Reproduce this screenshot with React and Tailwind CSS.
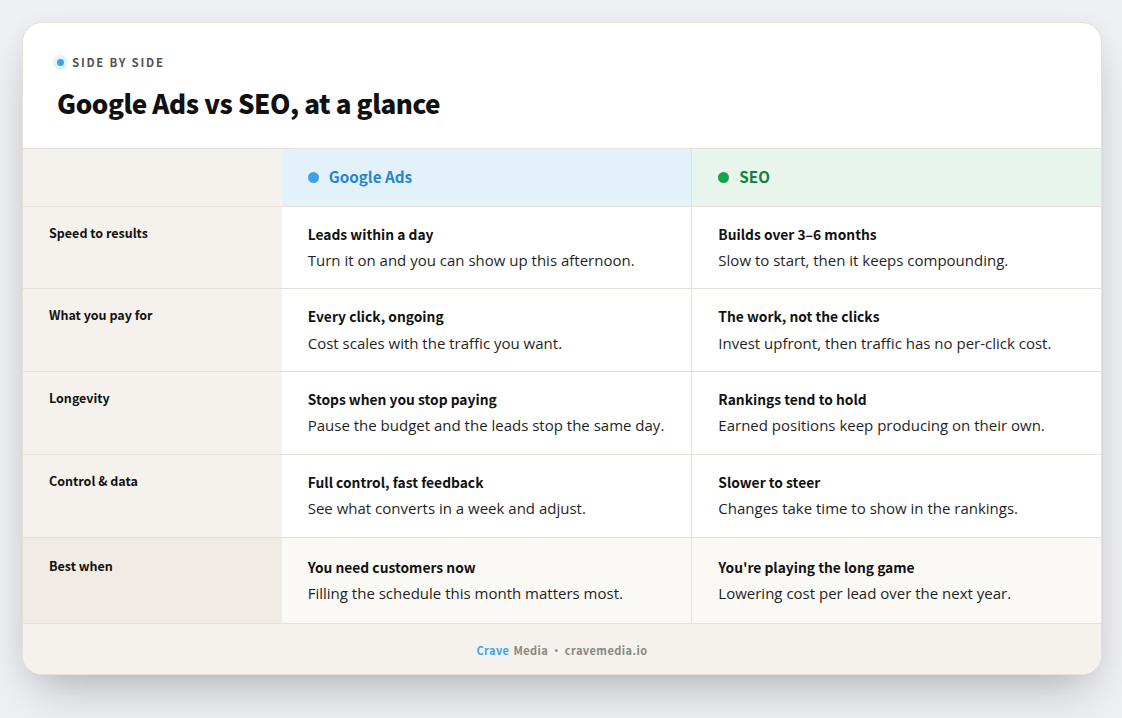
const rows = [
  {
    label: 'Speed to results',
    ads: ['Leads within a day', 'Turn it on and you can show up this afternoon.'],
    seo: ['Builds over 3–6 months', 'Slow to start, then it keeps compounding.'],
  },
  {
    label: 'What you pay for',
    ads: ['Every click, ongoing', 'Cost scales with the traffic you want.'],
    seo: ['The work, not the clicks', 'Invest upfront, then traffic has no per-click cost.'],
  },
  {
    label: 'Longevity',
    ads: ['Stops when you stop paying', 'Pause the budget and the leads stop the same day.'],
    seo: ['Rankings tend to hold', 'Earned positions keep producing on their own.'],
  },
  {
    label: 'Control & data',
    ads: ['Full control, fast feedback', 'See what converts in a week and adjust.'],
    seo: ['Slower to steer', 'Changes take time to show in the rankings.'],
  },
];

const best = {
  label: 'Best when',
  ads: ['You need customers now', 'Filling the schedule this month matters most.'],
  seo: ["You're playing the long game", 'Lowering cost per lead over the next year.'],
};

const heading = "font-['Noto_Sans_CJK_SC','Noto_Sans',sans-serif]";

function Cell({ title, text, right, highlight }) {
  return (
    <div className={`px-[26px] ${highlight ? 'pt-[19px] pb-[18.8px]' : 'pt-[17px] pb-[17.55px]'} ${right ? 'border-l border-[#e5e0d8]' : ''}`}>
      <div className={`${heading} text-[13.8px] leading-[21px] font-bold text-[#111111]`}>{title}</div>
      <div className="mt-[5.2px] text-[15px] leading-[21px] text-[#1f1f1f]">{text}</div>
    </div>
  );
}

function Row({ row, highlight }) {
  return (
    <div className={`grid grid-cols-[24%_38%_38%] border-t border-[#e5e0d8] ${highlight ? 'bg-[#fbf9f6]' : 'bg-white'}`}>
      <div className={`${heading} px-[26px] text-[12.5px] leading-[19px] font-bold text-[#111111] ${highlight ? 'bg-[#f0ebe4] pt-[18px]' : 'bg-[#f5f2ed] pt-[16px]'}`}>
        {row.label}
      </div>
      <Cell title={row.ads[0]} text={row.ads[1]} highlight={highlight} />
      <Cell title={row.seo[0]} text={row.seo[1]} right highlight={highlight} />
    </div>
  );
}

export default function App() {
  return (
    <div className="min-h-[718px] bg-[#eef0f3] p-[22px] font-['Open_Sans',sans-serif]">
      <div className="w-[1080px] rounded-[20px] border border-[#e5e0d8] bg-white shadow-[0_24px_50px_-14px_rgba(0,0,0,0.26),0_4px_24px_rgba(0,0,0,0.04)]">
        {/* Header */}
        <div className="h-[125px] px-[30px] pt-[29px]">
          <div className="flex items-center gap-[4px]">
            <span className="flex h-[15px] w-[15px] items-center justify-center rounded-full bg-[#e3f1fb]">
              <span className="h-[7px] w-[7px] rounded-full bg-[#3ba3ee]" />
            </span>
            <span className={`${heading} text-[11.5px] leading-[20px] font-bold tracking-[0.15em] text-[#55524e]`}>SIDE BY SIDE</span>
          </div>
          <h1 className={`${heading} mt-[10px] ml-[4px] text-[26px] leading-[42px] font-black tracking-[-0.42px] text-[#111111]`}>
            Google Ads vs SEO, at a glance
          </h1>
        </div>

        {/* Column heads */}
        <div className="grid h-[57.6px] grid-cols-[24%_38%_38%] border-t border-[#e5e0d8]">
          <div className="bg-[#f5f2ed]" />
          <div className="flex items-center gap-[10px] bg-[#e3f1fb] px-[26px]">
            <span className="h-[11px] w-[11px] rounded-full bg-[#3ba3ee]" />
            <span className={`${heading} pb-[2.5px] text-[15.25px] font-bold text-[#2584d0]`}>Google Ads</span>
          </div>
          <div className="flex items-center gap-[10px] border-l border-[#e5e0d8] bg-[#e8f5ec] px-[26px]">
            <span className="h-[11px] w-[11px] rounded-full bg-[#16a34a]" />
            <span className={`${heading} pb-[2.5px] text-[15.25px] font-bold text-[#15803d]`}>SEO</span>
          </div>
        </div>

        {rows.map((row) => (
          <Row key={row.label} row={row} />
        ))}
        <Row row={best} highlight />

        {/* Footer */}
        <div className={`${heading} flex h-[51.4px] items-center justify-center rounded-b-[19px] border-t border-[#e5e0d8] bg-[#f5f2ed] pt-[4px] text-[11px] font-bold tracking-[0.04em] text-[#8a8680]`}>
          <span className="text-[#3ba3ee]">Crave</span>
          <span className="ml-[4px]">Media</span>
          <span className="mx-[2.5px]">·</span>
          <span>cravemedia.io</span>
        </div>
      </div>
    </div>
  );
}
